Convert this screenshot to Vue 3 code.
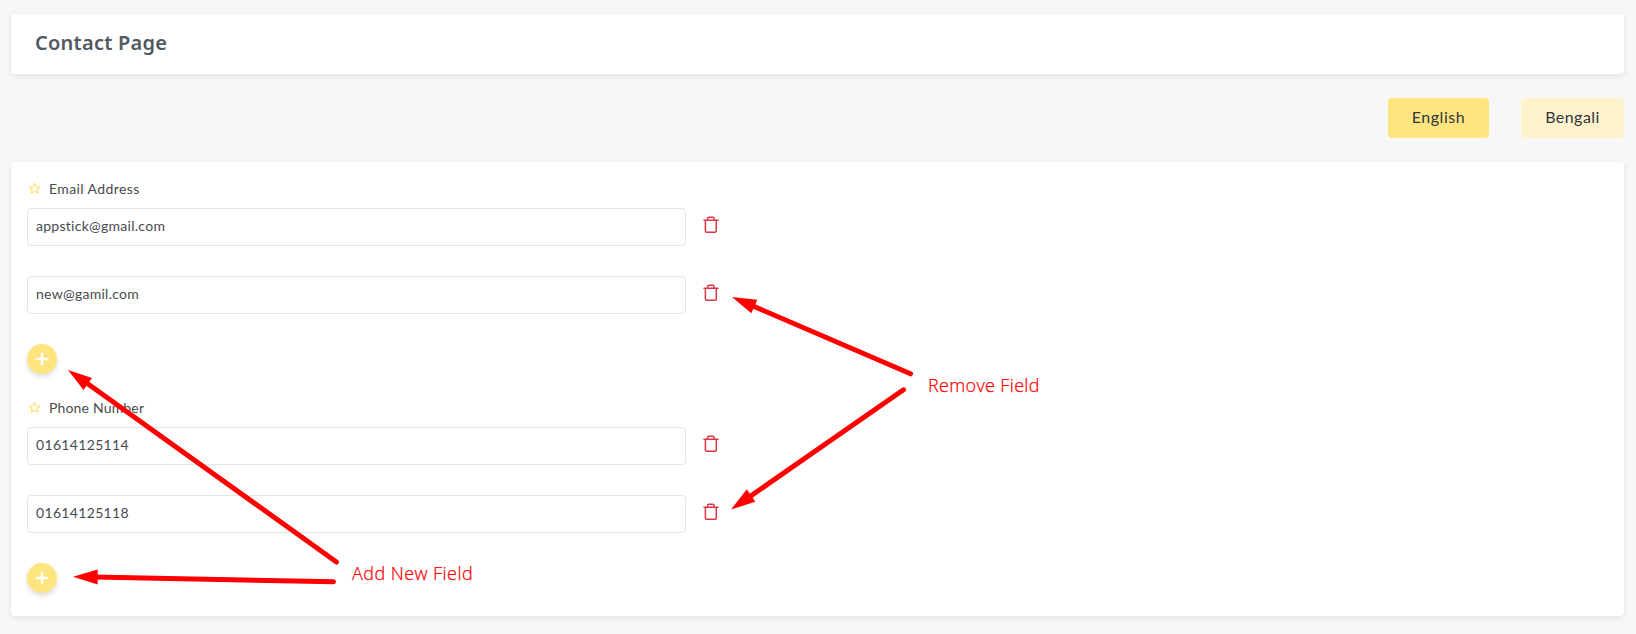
<script setup>
import { ref } from 'vue'

const groups = ref([
  { label: 'Email Address', kind: 'email', items: ['appstick@gmail.com', 'new@gamil.com'] },
  { label: 'Phone Number', kind: 'phone', items: ['01614125114', '01614125118'] },
])
const arrows = [
  { head: '68,370 92,378 83.5,390', x1: 86, y1: 382.5, x2: 336.5, y2: 562 },
  { head: '73,576.7 97.7,569.5 97.7,584.5', x1: 94, y1: 577, x2: 333.5, y2: 581.8 },
  { head: '732,297 757.3,299.7 751.3,313.3', x1: 753, y1: 306, x2: 910.5, y2: 373.8 },
  { head: '731,509.5 746.8,489.3 755.3,501.7', x1: 750, y1: 496.5, x2: 903.5, y2: 389.8 },
]
</script>

<template>
  <div class="page">
    <header class="card header"><h1>Contact Page</h1></header>
    <div class="langs">
      <button class="lang active">English</button>
      <button class="lang">Bengali</button>
    </div>
    <main class="card body">
      <section v-for="g in groups" :key="g.label" class="group" :class="g.kind">
        <div class="label">
          <svg class="star" width="13" height="13" viewBox="0 0 13 13">
            <path d="M6.5 1.2 8 4.7l3.9.3-3 2.5.95 3.8L6.5 9.3l-3.35 2L4.1 7.5 1.1 5 5 4.7Z" />
          </svg>
          <span>{{ g.label }}</span>
        </div>
        <div v-for="(v, i) in g.items" :key="i" class="row">
          <div class="input">{{ v }}</div>
          <svg class="trash" width="16" height="18" viewBox="0 0 16 18">
            <path d="M1 4.2H15M2.4 4.4V15.1Q2.4 16.3 3.6 16.3H12.1Q13.3 16.3 13.3 15.1V4.4M4.6 4V2.6Q4.6 1.2 6 1.2H9.8Q11.1 1.2 11.1 2.6V4" />
          </svg>
        </div>
        <button class="add" aria-label="Add">
          <svg width="14" height="14" viewBox="0 0 14 14"><path d="M7 1.7V12.3M1.7 7H12.3" /></svg>
        </button>
      </section>
    </main>
    <svg class="arrows" width="1636" height="634" viewBox="0 0 1636 634">
      <g v-for="a in arrows" :key="a.head">
        <line :x1="a.x1" :y1="a.y1" :x2="a.x2" :y2="a.y2" />
        <polygon :points="a.head" />
      </g>
    </svg>
    <span class="note remove">Remove Field</span>
    <span class="note addnew">Add New Field</span>
  </div>
</template>

<style>
body { background: #f7f7f7; overflow: hidden; }
</style>
<style scoped>
* { box-sizing: border-box; }
.page {
  position: relative;
  width: 1636px;
  height: 634px;
  padding: 14px 12px 0 11px;
  background: #f7f7f7;
  font-family: Lato, "Noto Sans", sans-serif;
  font-variant-ligatures: none;
  color: #464b50;
}
.card { background: #fff; border-radius: 4px; box-shadow: 0 2px 6px rgba(0, 0, 0, 0.09); }
.header { height: 60px; padding: 0 24px 2px; display: flex; align-items: center; }
h1 { margin: 0; font: 600 20px/24px "Noto Sans", sans-serif; letter-spacing: 0.25px; color: #4f5964; }
.langs { display: flex; justify-content: flex-end; gap: 32px; margin: 24px 0; }
.lang {
  width: 103px;
  height: 40px;
  padding: 0 0 2px;
  border: 0;
  border-radius: 4px;
  background: #fff3cd;
  color: #30363b;
  font: 400 16px/24px Lato, sans-serif;
  letter-spacing: 0.45px;
}
.lang.active { width: 101px; background: #ffe57f; letter-spacing: 0.55px; }
.body { height: 454px; padding: 16px 16px 0; }
.group { height: 219px; }
.label { display: flex; align-items: center; gap: 8px; height: 22px; padding-left: 1px; font-size: 14px; margin-bottom: 8px; }
.label span { position: relative; top: -1px; letter-spacing: 0.4px; }
.phone .label span { letter-spacing: 0.17px; }
.star { position: relative; top: -1px; fill: none; stroke: #ffe06f; stroke-width: 1.1; stroke-linejoin: round; }
.row { display: flex; align-items: flex-start; height: 38px; margin-bottom: 30px; }
.input {
  width: 659px;
  height: 38px;
  padding: 0 8px;
  border: 1px solid #e2e4e7;
  border-radius: 4px;
  font-size: 14px;
  line-height: 34px;
  letter-spacing: 0.27px;
}
.phone .input { letter-spacing: 0.33px; }
.trash { margin: 8px 0 0 17px; fill: none; stroke: #dc3545; stroke-width: 1.5; stroke-linecap: round; }
.add {
  display: grid;
  place-items: center;
  width: 30px;
  height: 30px;
  padding: 0;
  border: 0;
  border-radius: 50%;
  background: #ffe57f;
  box-shadow: 0 3px 5px rgba(0, 0, 0, 0.13);
}
.add path { stroke: #fff; stroke-width: 2.4; stroke-linecap: round; }
.arrows { position: absolute; inset: 0; }
.arrows line { stroke: #f00; stroke-width: 5; stroke-linecap: round; }
.arrows polygon { fill: #f00; }
.note {
  position: absolute;
  color: #f00;
  font: 300 18px/24px "Open Sans", sans-serif;
  -webkit-text-stroke: 0.25px #f00;
  white-space: nowrap;
}
.remove { left: 928px; top: 373px; letter-spacing: 0.35px; }
.addnew { left: 352px; top: 561px; letter-spacing: 0.45px; }
</style>
